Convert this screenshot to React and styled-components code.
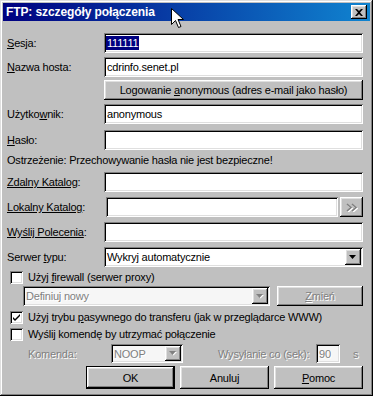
import React from "react";
import styled, { createGlobalStyle, css } from "styled-components";

const Global = createGlobalStyle`
  html, body { margin: 0; padding: 0; background: #c0c0c0; }
  body { font-family: "Liberation Sans", Arial, sans-serif; font-size: 11px; letter-spacing: -0.2px; color: #000; }
  * { box-sizing: border-box; }
`;

const raised = css`
  box-shadow: inset -1px -1px #000, inset 1px 1px #fff, inset -2px -2px #808080, inset 2px 2px #dfdfdf;
`;
const sunken = css`
  box-shadow: inset 1px 1px #808080, inset -1px -1px #fff, inset 2px 2px #000, inset -2px -2px #dfdfdf;
`;
const disabledText = css`
  color: #808080;
  text-shadow: 1px 1px 0 #fff;
`;

const Window = styled.div`
  position: relative;
  width: 373px;
  height: 396px;
  background: #c0c0c0;
  padding: 3px;
  display: flex;
  flex-direction: column;
  box-shadow: inset -1px -1px #000, inset 1px 1px #dfdfdf, inset -2px -2px #808080, inset 2px 2px #fff;
`;

const TitleBar = styled.div`
  height: 18px;
  flex: none;
  background: linear-gradient(to right, #000080, #1084d0);
  display: flex;
  align-items: center;
  justify-content: space-between;
  padding: 0 3px 0 3px;
`;

const TitleText = styled.span`
  color: #fff;
  font-weight: bold;
  font-size: 12px;
  letter-spacing: -0.1px;
`;

const CloseButton = styled.div`
  width: 16px;
  height: 14px;
  background: #c0c0c0;
  ${raised};
  display: flex;
  align-items: center;
  justify-content: center;
`;

const Body = styled.div`
  flex: 1;
  display: flex;
  flex-direction: column;
  padding: 12px 7px 0 4px;
`;

const Row = styled.div`
  display: flex;
  align-items: center;
  height: ${(p) => p.$h || 20}px;
  margin-top: ${(p) => p.$mt || 0}px;
  margin-left: ${(p) => p.$ml || 0}px;
  justify-content: ${(p) => p.$justify || "flex-start"};
  gap: ${(p) => p.$gap || 0}px;
  flex: none;
`;

const Label = styled.span`
  width: ${(p) => p.$w || 97}px;
  flex: none;
  white-space: nowrap;
  ${(p) => p.$disabled && disabledText};
  ${(p) => p.$ml && `margin-left: ${p.$ml}px;`}
`;

const U = styled.span`
  text-decoration: underline;
`;

const Field = styled.div`
  flex: ${(p) => (p.$w ? "none" : 1)};
  width: ${(p) => (p.$w ? `${p.$w}px` : "auto")};
  height: 100%;
  background: ${(p) => (p.$disabled ? "#f6f6f6" : "#fff")};
  ${sunken};
  display: flex;
  align-items: center;
  padding: 0 3px;
  white-space: nowrap;
  overflow: hidden;
  ${(p) => p.$disabled && disabledText};
`;

const Selected = styled.span`
  background: #000080;
  color: #fff;
  padding: 1px 1px;
  margin-left: -1px;
`;

const Combo = styled(Field)`
  padding: 2px 2px 2px 3px;
  justify-content: space-between;
`;

const ComboArrow = styled.div`
  width: 16px;
  height: 100%;
  flex: none;
  background: #c0c0c0;
  ${raised};
  display: flex;
  align-items: center;
  justify-content: center;
`;

const Button = styled.div`
  flex: ${(p) => (p.$w ? "none" : 1)};
  width: ${(p) => (p.$w ? `${p.$w}px` : "auto")};
  height: 100%;
  background: #c0c0c0;
  display: flex;
  align-items: center;
  justify-content: center;
  white-space: nowrap;
  ${raised};
  ${(p) => p.$disabled && disabledText};
  ${(p) =>
    p.$default &&
    css`
      box-shadow: inset 0 0 0 1px #000, inset -2px -2px #000, inset 2px 2px #fff, inset -3px -3px #808080,
        inset 3px 3px #dfdfdf;
    `}
`;

const CheckRow = styled(Row)`
  gap: 5px;
`;

const CheckBox = styled.div`
  width: 13px;
  height: 13px;
  flex: none;
  background: #fff;
  ${sunken};
  display: flex;
  align-items: center;
  justify-content: center;
`;

const CheckText = styled.span`
  white-space: nowrap;
`;

const Cursor = styled.svg`
  position: absolute;
  left: 171px;
  top: 8px;
`;

const DownArrow = ({ disabled }) => (
  <svg width="8" height="5" viewBox="0 0 8 5">
    {disabled && <path d="M1 1h7L4.5 4.5z" fill="#fff" />}
    <path d="M0 0h7L3.5 4z" fill={disabled ? "#808080" : "#000"} />
  </svg>
);

const Chevrons = () => (
  <svg width="12" height="9" viewBox="0 0 12 9">
    <path d="M1 1l4 3.5L1 8M6 1l4 3.5L6 8" fill="none" stroke="#fff" strokeWidth="1.6" transform="translate(1,1)" />
    <path d="M1 1l4 3.5L1 8M6 1l4 3.5L6 8" fill="none" stroke="#808080" strokeWidth="1.6" />
  </svg>
);

const Check = () => (
  <svg width="7" height="7" viewBox="0 0 7 7">
    <path d="M0 2l2 2 5-5v2l-5 5-2-2z" fill="#000" transform="translate(0,1)" />
  </svg>
);

export default function App() {
  return (
    <>
      <Global />
      <Window>
        <TitleBar>
          <TitleText>FTP: szczegóły połączenia</TitleText>
          <CloseButton>
            <svg width="8" height="7" viewBox="0 0 8 7">
              <path d="M0 0h2l2 2 2-2h2L5 3.5 8 7H6L4 5 2 7H0l3-3.5z" fill="#000" />
            </svg>
          </CloseButton>
        </TitleBar>
        <Body>
          <Row>
            <Label>
              <U>S</U>esja:
            </Label>
            <Field>
              <Selected>111111</Selected>
            </Field>
          </Row>
          <Row $mt={4}>
            <Label>
              <U>N</U>azwa hosta:
            </Label>
            <Field>cdrinfo.senet.pl</Field>
          </Row>
          <Row $mt={3}>
            <Label />
            <Button>
              Logowanie&nbsp;<U>a</U>nonymous (adres e-mail jako hasło)
            </Button>
          </Row>
          <Row $mt={4}>
            <Label>
              Użytko<U>w</U>nik:
            </Label>
            <Field>anonymous</Field>
          </Row>
          <Row $mt={6}>
            <Label>
              <U>H</U>asło:
            </Label>
            <Field />
          </Row>
          <Row>
            <Label>Ostrzeżenie: Przechowywanie hasła nie jest bezpieczne!</Label>
          </Row>
          <Row $mt={2}>
            <Label>
              <U>Zdalny Katalog</U>:
            </Label>
            <Field />
          </Row>
          <Row $mt={5} $gap={2}>
            <Label>
              <U>Lokalny Katalog</U>:
            </Label>
            <Field />
            <Button $w={23}>
              <Chevrons />
            </Button>
          </Row>
          <Row $mt={5}>
            <Label>
              <U>Wyślij Polecenia</U>:
            </Label>
            <Field />
          </Row>
          <Row $mt={5}>
            <Label>
              Serwer <U>t</U>ypu:
            </Label>
            <Combo>
              <span>Wykryj automatycznie</span>
              <ComboArrow>
                <DownArrow />
              </ComboArrow>
            </Combo>
          </Row>
          <CheckRow $mt={2} $h={16} $ml={3}>
            <CheckBox />
            <CheckText>
              Użyj <U>f</U>irewall (serwer proxy)
            </CheckText>
          </CheckRow>
          <Row $mt={1} $ml={16} $gap={7}>
            <Combo $w={247} $disabled>
              <span>Definiuj nowy</span>
              <ComboArrow>
                <DownArrow disabled />
              </ComboArrow>
            </Combo>
            <Button $disabled>
              <U>Z</U>mień
            </Button>
          </Row>
          <CheckRow $mt={3} $h={16} $ml={3}>
            <CheckBox>
              <Check />
            </CheckBox>
            <CheckText>
              Użyj trybu <U>p</U>asywnego do transferu (jak w przeglądarce WWW)
            </CheckText>
          </CheckRow>
          <CheckRow $mt={1} $h={16} $ml={3}>
            <CheckBox />
            <CheckText>Wyślij komendę by utrzymać połączenie</CheckText>
          </CheckRow>
          <Row $mt={2} $h={19} $ml={21}>
            <Label $w={83} $disabled>
              Komenda:
            </Label>
            <Combo $w={72} $disabled>
              <span>NOOP</span>
              <ComboArrow>
                <DownArrow disabled />
              </ComboArrow>
            </Combo>
            <Label $w={98} $ml={35} $disabled>
              Wysyłanie co (sek):
            </Label>
            <Field $w={24} $disabled>
              90
            </Field>
            <Label $w={12} $ml={13} $disabled>
              s
            </Label>
          </Row>
          <Row $mt={3} $h={23} $justify="flex-end" $gap={5}>
            <Button $w={89} $default>
              OK
            </Button>
            <Button $w={89}>Anuluj</Button>
            <Button $w={89}>
              <U>P</U>omoc
            </Button>
          </Row>
        </Body>
        <Cursor width="13" height="21" viewBox="0 0 13 21">
          <path d="M0.5 0.5v16l4-4 3 7 2.5-1-3-7h5.5z" fill="#fff" stroke="#000" strokeWidth="1" />
        </Cursor>
      </Window>
    </>
  );
}
